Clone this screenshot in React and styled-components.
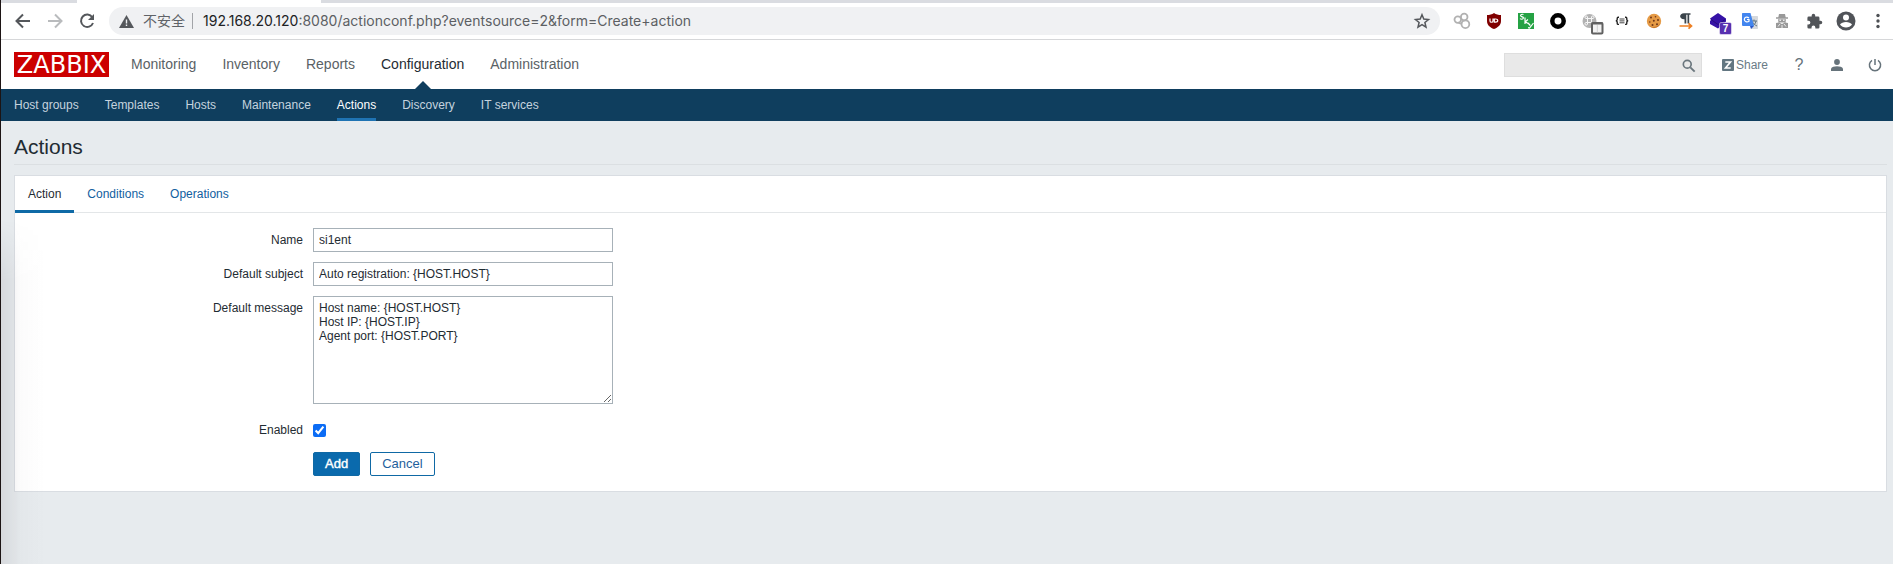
import React from 'react';
import styled, { createGlobalStyle, css } from 'styled-components';

const Global = createGlobalStyle`
  * { box-sizing: border-box; }
  html, body { margin: 0; background: #e7ebee; }
  body { font: 12px/24px "Liberation Sans", Arial, sans-serif; color: #1f2c33; }
  button, input, textarea { font: inherit; color: inherit; }
  a { color: inherit; text-decoration: none; }
  ul { list-style: none; margin: 0; padding: 0; }
`;

const Page = styled.div`
  position: relative;
  min-height: 100vh;
  border-left: 1px solid #1c1414;
`;

const EdgeShade = styled.div`
  position: absolute;
  top: 220px;
  bottom: 0;
  left: 0;
  width: 44px;
  pointer-events: none;
  background: linear-gradient(90deg, rgba(70, 60, 70, 0.1), rgba(70, 60, 70, 0.02) 45%, transparent);
  mask-image: linear-gradient(180deg, transparent, #000 60px);
`;

/* Browser chrome */
const TabStrip = styled.div`
  display: flex;
  height: 3px;
  padding-left: 76px;
  background: #dadce1;
`;

const ActiveBrowserTab = styled.div`
  width: 244px;
  background: #fff;
`;

const Toolbar = styled.div`
  display: flex;
  align-items: center;
  height: 37px;
  padding-left: 6px;
  background: #fff;
  border-bottom: 1px solid #d6d7d9;
`;

const ToolButton = styled.button`
  display: flex;
  flex: none;
  align-items: center;
  justify-content: center;
  width: ${(p) => (p.$last ? 31 : 32)}px;
  height: 32px;
  padding: 0;
  border: 0;
  background: none;
  svg { display: block; overflow: visible; }
`;

const Omnibox = styled.div`
  display: flex;
  flex: 1;
  align-items: center;
  height: 28px;
  margin: 0 6px;
  padding: 0 2px 0 10px;
  border-radius: 14px;
  background: #f0f1f3;
  font: 14px/20px Inter, "Noto Sans CJK SC", sans-serif;
  white-space: nowrap;
`;

const SiteInfo = styled.button`
  display: flex;
  align-items: center;
  gap: 9px;
  height: 16px;
  padding: 0 7px 0 0;
  border: 0;
  border-right: 1px solid #a2a4a8;
  background: none;
  color: #5f6368;
  font: 14px/16px Roboto, "Noto Sans CJK SC", sans-serif;
`;

const Url = styled.div`
  flex: 1;
  padding-left: 10px;
  color: #5c5f63;
  b { font-weight: 400; color: #202124; }
`;

/* Application header */
const Header = styled.header`
  display: flex;
  align-items: center;
  height: 49px;
  padding-left: 13px;
  background: #fff;
`;

const Logo = styled.a`
  flex: none;
  width: 95px;
  height: 25px;
  background: #cc0000;
  color: #fff;
  font: 24px/26px "DejaVu Sans", sans-serif;
  text-align: center;
`;

const MainNav = styled.ul`
  display: flex;
  flex: 1;
  gap: 26px;
  margin-left: 22px;
  font-size: 14px;
  line-height: 49px;
`;

const MainLink = styled.a`
  position: relative;
  display: block;
  color: ${(p) => (p.$active ? '#1f2c33' : '#5a6266')};
  ${(p) => p.$active && css`
    &::after {
      content: "";
      position: absolute;
      bottom: 0;
      left: 50%;
      margin-left: -8px;
      border: 8px solid transparent;
      border-top: 0;
      border-bottom-color: #0f3e5e;
    }
  `}
`;

const Search = styled.form`
  display: flex;
  align-items: center;
  width: 198px;
  height: 24px;
  margin-right: 20px;
  border: 1px solid #dedede;
  background: #e9e9e9;
`;

const SearchInput = styled.input`
  flex: 1;
  min-width: 0;
  height: 22px;
  padding: 0 5px;
  border: 0;
  background: none;
`;

const SearchButton = styled.button`
  width: 24px;
  height: 22px;
  padding: 5px;
  border: 0;
  background: none;
  svg { display: block; }
`;

const ShareLink = styled.a`
  display: flex;
  align-items: center;
  gap: 2px;
  margin-right: 13px;
  color: #6a7b86;
`;

const HeaderIcons = styled.div`
  display: flex;
  gap: 2px;
`;

const HeaderIcon = styled.a`
  display: flex;
  align-items: center;
  justify-content: center;
  width: 36px;
  height: 24px;
  color: #66737b;
  font-size: 16px;
`;

const SubNav = styled.ul`
  display: flex;
  gap: 26px;
  height: 32px;
  padding-left: 13px;
  background: #0f3e5e;
`;

const SubLink = styled.a`
  display: block;
  height: 32px;
  line-height: 32px;
  color: ${(p) => (p.$active ? '#fff' : '#c5d3de')};
  box-shadow: ${(p) => (p.$active ? 'inset 0 -3px #1f73b3' : 'none')};
`;

/* Content */
const Content = styled.main`
  padding: 12px 6px 16px 13px;
`;

const Title = styled.h1`
  margin: 0 0 10px;
  padding-bottom: 3px;
  border-bottom: 1px solid #dbdfe2;
  font-size: 21px;
  font-weight: 400;
  line-height: 28px;
`;

const Panel = styled.section`
  border: 1px solid #d9dde2;
  background: #fff;
`;

const Tabs = styled.ul`
  display: flex;
  height: 37px;
  border-bottom: 1px solid #e3e6e8;
`;

const Tab = styled.a`
  display: block;
  height: 37px;
  padding: 0 13px;
  line-height: 36px;
  color: ${(p) => (p.$active ? '#1f2c33' : '#1160a0')};
  box-shadow: ${(p) => (p.$active ? 'inset 0 -3px #0f6aa6' : 'none')};
`;

const Form = styled.form`
  display: flex;
  flex-direction: column;
  gap: 10px;
  padding: 15px 0;
`;

const Row = styled.div`
  display: grid;
  grid-template-columns: 288px 1fr;
  column-gap: 10px;
  min-height: 24px;
`;

const Label = styled.label`
  text-align: right;
`;

const field = css`
  display: block;
  width: 300px;
  border: 1px solid #a7b1b8;
  border-radius: 0;
  background: #fff;
  outline: 0;
`;

const TextInput = styled.input`
  ${field}
  height: 24px;
  padding: 0 5px;
`;

const TextArea = styled.textarea`
  ${field}
  height: 108px;
  margin-bottom: 4px;
  padding: 4px 5px;
  line-height: 14px;
`;

const Check = styled.input`
  align-self: center;
  width: 13px;
  height: 13px;
  margin: 0;
  accent-color: #0b6cf5;
`;

const Actions = styled.div`
  grid-column: 2;
  display: flex;
  gap: 10px;
`;

const Button = styled.button`
  height: 24px;
  padding: 0 11px;
  border: 1px solid #0f69a5;
  border-radius: 2px;
  background: ${(p) => (p.$primary ? '#0a6aad' : '#fff')};
  color: ${(p) => (p.$primary ? '#fff' : '#1f5f9c')};
  font-size: 13px;
  line-height: 22px;
  -webkit-text-stroke: ${(p) => (p.$primary ? '0.4px #fff' : '0')};
`;

const Icon = ({ size = 16, box = 16, children }) => (
  <svg width={size} height={size} viewBox={`0 0 ${box} ${box}`} fill="none" aria-hidden="true">{children}</svg>
);

const BackIcon = ({ color = '#54575b', flip }) => (
  <Icon>
    <path d={flip ? 'M1 8h13M8 1.5 14.5 8 8 14.5' : 'M15 8H2M8 1.5 1.5 8 8 14.5'} stroke={color} strokeWidth="2" />
  </Icon>
);

const extensions = [
  ['Linked circles', <Icon key="i"><g stroke="#b1b1b1" strokeWidth="1.8"><circle cx="3.8" cy="6.6" r="3.3" /><circle cx="10.2" cy="4" r="3.3" /><circle cx="11.4" cy="11.2" r="3.9" /><path d="m4.500 10 3.500 1" /></g></Icon>],
  ['uBlock Origin', <Icon key="i"><path d="M8 0c2 1.5 4.500 2 7 2v6c0 4-3 6.500-7 8-4-1.500-7-4-7-8V2c2.500 0 5-.5 7-2Z" fill="#800000" /><path d="M4 5.500v2.400c0 1.800 3 1.800 3 0V5.500M8.300 5.500v3.700h1.200c3 0 3-3.200 0-3.200H8.300" stroke="#fff" strokeWidth="1.200" /></Icon>],
  ['Sky', <Icon key="i"><rect width="16" height="16" fill="#25a244" /><path d="M5.500 1.500C4 .8 2 1.700 2.800 3s3 .6 2.500 2.200C5 6.500 3 6.500 2 5.600M7 4.500v6.500M10 6.500 7.200 8.800l3 1.800M10 10l2.300 2.500M15.500 10l-4 5-1.500-.3" stroke="#fff" strokeWidth="1.200" /></Icon>],
  ['Ring', <Icon key="i"><circle cx="8" cy="8" r="5.700" stroke="#000" strokeWidth="4.500" /></Icon>],
  ['Shortcuts', <Icon key="i"><circle cx="7.500" cy="8" r="7" fill="#b2b2b2" /><path d="M5.500 5.500h4v4h-4zM5.500 5.500H4a1.300 1.300 0 1 1 1.500-1.500v1.500M9.500 5.500V4A1.300 1.300 0 1 1 11 5.500H9.500M5.500 9.500V11A1.300 1.300 0 1 1 4 9.500h1.500" stroke="#f6f6f6" /><rect x="10" y="10" width="10.500" height="10.500" rx="1" fill="#f3f3f3" stroke="#616161" strokeWidth="2" /><path d="M9.500 10.500h11.500" stroke="#616161" strokeWidth="2" /><path d="M15.300 12v7.500" stroke="#d0d0d0" /></Icon>],
  ['JSON', <Icon key="i"><path d="M5 4.200H4.200Q3.200 4.200 3.200 5.500V6.500Q3.200 7.700 1.800 7.700 3.200 7.700 3.200 9v1.200q0 1.200 1 1.200H5M11 4.200h.8q1 0 1 1.300V6.500q0 1.200 1.400 1.200-1.400 0-1.400 1.300v1.200q0 1.200-1 1.200H11" stroke="#222" strokeWidth="1.400" /><path d="M5.500 6h5M5.500 7.900h5M5.500 9.800h5" stroke="#444" strokeWidth="1" /></Icon>],
  ['Cookies', <Icon key="i"><circle cx="8" cy="8" r="7.200" fill="#e59a45" /><path d="M2 12c3 3 10 3 12.500-2A7.200 7.200 0 0 1 2 12Z" fill="#bf6f28" /><g fill="#6e3619"><circle cx="5" cy="4.500" r="1" /><circle cx="9.500" cy="3.800" r=".8" /><circle cx="12" cy="7" r="1" /><circle cx="7.800" cy="7.700" r="1" /><circle cx="3.800" cy="9" r=".8" /><circle cx="6.500" cy="12" r="1" /><circle cx="11" cy="11.300" r="1" /></g></Icon>],
  ['Paragraph', <Icon key="i"><path d="M6.500 10.500V6.200C.8 6.500.8.200 6 .200h6.500v1.600h-1.300v8.700H9.500V1.800H8.300v8.700z" fill="#3b444b" /><path d="M1.500 13H13M10.500 10.300l3 2.700-3 2.700" stroke="#ee7f22" strokeWidth="1.700" /></Icon>],
  ['Layers', <Icon key="i"><path d="m8 0 8 5.500v3L8 15.500 0 11V8l1-1-1-1.500z" fill="#3512a6" /><path d="m1 6.500 7 5 7-5" stroke="#250974" strokeWidth=".8" /><rect x="9.500" y="9.500" width="12" height="12" rx="1.500" fill="#5830b0" stroke="#fff" strokeWidth=".5" /><text x="15.500" y="19" fill="#fff" fontFamily="Liberation Sans" fontSize="10" fontWeight="700" textAnchor="middle">7</text></Icon>],
  ['Translate', <Icon key="i"><path d="M7 3h8c.6 0 1 .4 1 1v11c0 .6-.4 1-1 1H9z" fill="#d5d8dc" /><path d="M9 8h6M12 6.500V8M14 8c-.5 3-2.500 4.500-4 5M10.500 9c1 2 2.500 3 4.500 4" stroke="#607480" /><path d="M1 0h7.500L12 13H1a1 1 0 0 1-1-1V1c0-.6.400-1 1-1Z" fill="#4285ef" /><path d="m9 16-1-3h4z" fill="#2a56c6" /><path d="M7 5C4.500 3 2.300 4.600 2.300 6.500S5 9.700 7 8.200V6.500H5" stroke="#fff" strokeWidth="1.200" /></Icon>],
  ['Incognito', <Icon key="i"><path d="M5 1h6l.7 3.300H14v1.400H2V4.300h2.300zM4 6.300h8L11.500 9.500h-7zM2 10l3-.5L8 11l3-1.500 3 .5v5H2z" fill="#999" /><circle cx="6.200" cy="7.300" r=".8" fill="#fff" /><circle cx="9.800" cy="7.300" r=".8" fill="#fff" /><path d="m4 13.500 2-2.500M12 13.500l-2-2.500M8 12v4" stroke="#fff" strokeWidth=".8" /></Icon>],
  ['Extensions', <Icon key="i" box={24} size={17}><path d="M20.500 11H19V7a2 2 0 0 0-2-2h-4V3.500a2.500 2.500 0 0 0-5 0V5H4a2 2 0 0 0-2 2v3.800h1.500a2.700 2.700 0 0 1 0 5.400H2V20a2 2 0 0 0 2 2h3.800v-1.500a2.700 2.700 0 0 1 5.400 0V22H17a2 2 0 0 0 2-2v-4h1.500a2.500 2.500 0 0 0 0-5z" fill="#525559" /></Icon>],
  ['Profile', <Icon key="i" box={20} size={20}><circle cx="10" cy="10" r="9.500" fill="#505358" /><circle cx="10" cy="6.500" r="3" fill="#fff" /><path d="M4 13.500c2-3.500 10-3.500 12 0-2.500 4-9.500 4-12 0Z" fill="#fff" /></Icon>],
  ['Menu', <Icon key="i"><g fill="#4d5054"><circle cx="8" cy="2.500" r="1.700" /><circle cx="8" cy="8" r="1.700" /><circle cx="8" cy="13.500" r="1.700" /></g></Icon>],
];

const mainItems = ['Monitoring', 'Inventory', 'Reports', 'Configuration', 'Administration'];
const subItems = ['Host groups', 'Templates', 'Hosts', 'Maintenance', 'Actions', 'Discovery', 'IT services'];
const tabItems = ['Action', 'Conditions', 'Operations'];

function BrowserBar() {
  return (
    <>
      <TabStrip><ActiveBrowserTab /></TabStrip>
      <Toolbar>
        <ToolButton aria-label="Back"><BackIcon /></ToolButton>
        <ToolButton aria-label="Forward"><BackIcon flip color="#b9bbbd" /></ToolButton>
        <ToolButton aria-label="Reload">
          <Icon>
            <path d="M13.300 4.200A6.200 6.200 0 1 0 14 10" stroke="#54575b" strokeWidth="2" />
            <path d="M15 1v6H9z" fill="#54575b" />
          </Icon>
        </ToolButton>
        <Omnibox>
          <SiteInfo>
            <svg width="15" height="13" viewBox="0 0 15 13" aria-hidden="true">
              <path d="M7.500 0 15 13H0z" fill="#55585c" />
              <path d="M7.500 4.500v4M7.500 9.500V11" stroke="#f0f1f3" strokeWidth="1.400" />
            </svg>
            不安全
          </SiteInfo>
          <Url><b>192.168.20.120</b>:8080/actionconf.php?eventsource=2&amp;form=Create+action</Url>
          <ToolButton aria-label="Bookmark">
            <Icon><path d="m8 1.800 1.800 4.300 4.700.4-3.600 3 1.100 4.600L8 11.700l-4 2.400 1.100-4.600-3.600-3 4.700-.4z" stroke="#54575b" strokeWidth="1.500" /></Icon>
          </ToolButton>
        </Omnibox>
        {extensions.map(([name, icon], i) => (
          <ToolButton key={name} aria-label={name} $last={i === extensions.length - 1}>{icon}</ToolButton>
        ))}
      </Toolbar>
    </>
  );
}

function AppHeader() {
  return (
    <>
      <Header>
        <Logo href="#">ZABBIX</Logo>
        <MainNav>
          {mainItems.map((t) => <li key={t}><MainLink href="#" $active={t === 'Configuration'}>{t}</MainLink></li>)}
        </MainNav>
        <Search>
          <SearchInput type="text" aria-label="Search" />
          <SearchButton type="button" aria-label="Search">
            <Icon size={14}><circle cx="6" cy="6" r="4.500" stroke="#6a767d" strokeWidth="1.900" /><path d="m9.500 9.500 5 5" stroke="#6a767d" strokeWidth="2.200" /></Icon>
          </SearchButton>
        </Search>
        <ShareLink href="#">
          <Icon size={12} box={12}><rect width="12" height="12" rx="1" fill="#627681" /><path d="M3.300 3h5.200L3.500 9h5.200" stroke="#fff" strokeWidth="1.600" /></Icon>
          Share
        </ShareLink>
        <HeaderIcons>
          <HeaderIcon href="#" title="Help">?</HeaderIcon>
          <HeaderIcon href="#" title="Profile">
            <Icon size={12} box={12}><circle cx="6" cy="3" r="2.900" fill="currentColor" /><path d="M0 12V9.500C1.500 6.500 10.500 6.500 12 9.500V12z" fill="currentColor" /></Icon>
          </HeaderIcon>
          <HeaderIcon href="#" title="Sign out">
            <Icon size={14} box={14}><path d="M4 2.300a5.600 5.600 0 1 0 6 0M7 1v6" stroke="currentColor" strokeWidth="1.500" /></Icon>
          </HeaderIcon>
        </HeaderIcons>
      </Header>
      <SubNav>
        {subItems.map((t) => <li key={t}><SubLink href="#" $active={t === 'Actions'}>{t}</SubLink></li>)}
      </SubNav>
    </>
  );
}

export default function App() {
  return (
    <Page>
      <Global />
      <BrowserBar />
      <AppHeader />
      <Content>
        <Title>Actions</Title>
        <Panel>
          <Tabs>
            {tabItems.map((t) => <li key={t}><Tab href="#" $active={t === 'Action'}>{t}</Tab></li>)}
          </Tabs>
          <Form>
            <Row>
              <Label htmlFor="name">Name</Label>
              <TextInput id="name" type="text" defaultValue="si1ent" />
            </Row>
            <Row>
              <Label htmlFor="subject">Default subject</Label>
              <TextInput id="subject" type="text" defaultValue="Auto registration: {HOST.HOST}" />
            </Row>
            <Row>
              <Label htmlFor="message">Default message</Label>
              <TextArea id="message" defaultValue={'Host name: {HOST.HOST}\nHost IP: {HOST.IP}\nAgent port: {HOST.PORT}'} />
            </Row>
            <Row>
              <Label htmlFor="enabled">Enabled</Label>
              <Check id="enabled" type="checkbox" defaultChecked />
            </Row>
            <Row>
              <Actions>
                <Button type="button" $primary>Add</Button>
                <Button type="button">Cancel</Button>
              </Actions>
            </Row>
          </Form>
        </Panel>
      </Content>
      <EdgeShade />
    </Page>
  );
}
